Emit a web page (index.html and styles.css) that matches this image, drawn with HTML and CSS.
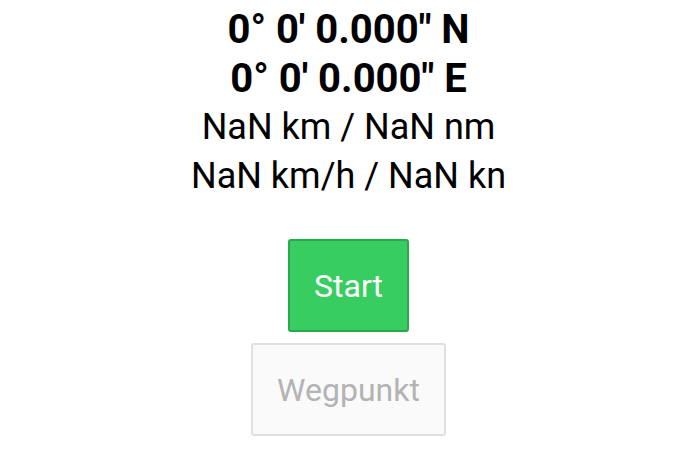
FILE: index.html
```html
<!DOCTYPE html>
<html>
<head>
<meta charset="utf-8">
<link rel="stylesheet" href="styles.css">
</head>
<body>
<main class="app">
  <div class="readout">
    <div class="coord">0° 0' 0.000" N</div>
    <div class="coord">0° 0' 0.000" E</div>
    <div class="stat">NaN km / NaN nm</div>
    <div class="stat">NaN km/h / NaN kn</div>
  </div>
  <div class="actions">
    <button class="btn btn-start">Start</button>
    <button class="btn btn-waypoint" disabled>Wegpunkt</button>
  </div>
</main>
</body>
</html>
```
FILE: styles.css
```css
html, body {
  margin: 0;
  padding: 0;
  background: #ffffff;
}
body {
  font-family: Roboto, "Liberation Sans", sans-serif;
  color: #000;
}
.app {
  display: flex;
  flex-direction: column;
  align-items: center;
  padding-top: 5px;
}
.readout {
  display: flex;
  flex-direction: column;
  align-items: center;
  line-height: 49px;
}
.coord {
  font-weight: 700;
  font-size: 40px;
}
.stat {
  font-weight: 400;
  font-size: 36px;
}
.actions {
  display: flex;
  flex-direction: column;
  align-items: center;
  gap: 11px;
  margin-top: 38px;
}
.btn {
  font-family: Roboto, "Liberation Sans", sans-serif;
  font-size: 32px;
  line-height: 37px;
  padding: 2px 24px 0;
  border-radius: 3px;
  box-sizing: border-box;
  height: 93px;
}
.btn-start {
  background: #37cd61;
  border: 2px solid #2aa84c;
  color: #fff;
}
.btn-waypoint {
  background: #fafafa;
  border: 2px solid #e0e0e0;
  color: #b3b3b3;
}
```
